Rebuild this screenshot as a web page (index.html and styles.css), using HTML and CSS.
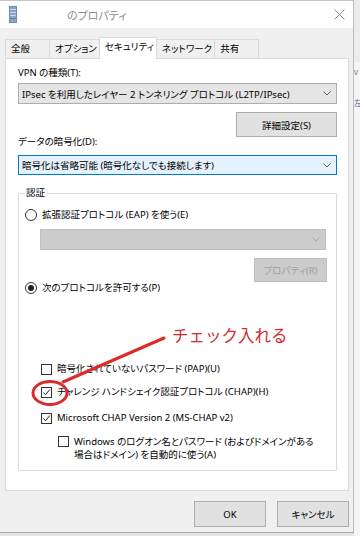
FILE: index.html
```html
<!DOCTYPE html>
<html lang="ja">
<head>
  <meta charset="UTF-8" />
  <meta name="viewport" content="width=device-width, initial-scale=1.0" />
  <title>のプロパティ</title>
  <link rel="stylesheet" href="styles.css">
</head>
<body>
  <div class="window">
    <div class="titlebar">
      <svg class="app-icon" viewBox="0 0 8 17">
        <rect x="0" y="0" width="8" height="17" fill="#6e8db3"/>
        <rect x="1" y="1" width="6" height="15" fill="#8aa6c8"/>
        <rect x="1" y="3" width="6" height="1" fill="#c9d8ea"/>
        <rect x="1" y="6" width="6" height="1" fill="#c9d8ea"/>
        <rect x="1" y="9" width="6" height="1" fill="#c9d8ea"/>
        <rect x="1" y="12" width="6" height="1" fill="#5d7aa0"/>
      </svg>
      <span class="title">のプロパティ</span>
      <svg class="close" viewBox="0 0 11 11">
        <path d="M0.5 0.5 L10.5 10.5 M10.5 0.5 L0.5 10.5" stroke="#8a8a8a" stroke-width="1" fill="none"/>
      </svg>
    </div>

    <div class="tabs">
      <div class="tab">全般</div>
      <div class="tab">オプション</div>
      <div class="tab active">セキュリティ</div>
      <div class="tab">ネットワーク</div>
      <div class="tab">共有</div>
    </div>

    <div class="panel">
      <div class="label">VPN の種類(T):</div>
      <div class="select">
        <span>IPsec を利用したレイヤー 2 トンネリング プロトコル (L2TP/IPsec)</span>
        <svg class="chevron" viewBox="0 0 8 5"><path d="M0.5 0.5 L4 4 L7.5 0.5" fill="none" stroke="#606060"/></svg>
      </div>
      <div class="btn-row">
        <button class="btn wide">詳細設定(S)</button>
      </div>
      <div class="label label-tight">データの暗号化(D):</div>
      <div class="select focus">
        <span>暗号化は省略可能 (暗号化なしでも接続します)</span>
        <svg class="chevron" viewBox="0 0 8 5"><path d="M0.5 0.5 L4 4 L7.5 0.5" fill="none" stroke="#606060"/></svg>
      </div>

      <fieldset class="group">
        <legend>認証</legend>
        <div class="radio-row">
          <span class="radio"></span>
          <span>拡張認証プロトコル (EAP) を使う(E)</span>
        </div>
        <div class="select disabled">
          <svg class="chevron" viewBox="0 0 8 5"><path d="M0.5 0.5 L4 4 L7.5 0.5" fill="none" stroke="#a8a8a8"/></svg>
        </div>
        <div class="btn-row">
          <button class="btn disabled">プロパティ(R)</button>
        </div>
        <div class="radio-row radio-tight">
          <span class="radio on"></span>
          <span>次のプロトコルを許可する(P)</span>
        </div>

        <div class="checks">
          <div class="check-row">
            <span class="box"></span>
            <span>暗号化されていないパスワード (PAP)(U)</span>
          </div>
          <div class="check-row">
            <span class="box"><svg viewBox="0 0 9 9"><path d="M1.5 4.5 L3.5 6.8 L7.8 1.5" fill="none" stroke="#222" stroke-width="1"/></svg></span>
            <span>チャレンジ ハンドシェイク認証プロトコル (CHAP)(H)</span>
          </div>
          <div class="check-row">
            <span class="box"><svg viewBox="0 0 9 9"><path d="M1.5 4.5 L3.5 6.8 L7.8 1.5" fill="none" stroke="#222" stroke-width="1"/></svg></span>
            <span>Microsoft CHAP Version 2 (MS-CHAP v2)</span>
          </div>
          <div class="check-row nested">
            <span class="box"></span>
            <span>Windows のログオン名とパスワード (およびドメインがある<br>場合はドメイン) を自動的に使う(A)</span>
          </div>
        </div>
      </fieldset>
    </div>

    <div class="footer">
      <button class="btn">OK</button>
      <button class="btn">キャンセル</button>
    </div>

    <!-- 赤い書き込み -->
    <svg class="markup" viewBox="0 0 354 533">
      <line x1="63" y1="382" x2="164" y2="338" stroke="#dd2a2a" stroke-width="3" stroke-linecap="round"/>
      <ellipse cx="50" cy="393" rx="17" ry="11.5" fill="none" stroke="#dd2a2a" stroke-width="3"/>
    </svg>
    <span class="note">チェック入れる</span>
  </div>

  <div class="desk">
    <div class="desk-top"></div>
    <div class="desk-v">v</div>
    <div class="desk-blue">左</div>
  </div>
</body>
</html>
```

FILE: styles.css
```css
* {
  box-sizing: border-box;
}
body {
  margin: 0;
  height: 536px;
  overflow: hidden;
  display: flex;
  background: #e4e4e4;
  color: #000;
  font-family: "Noto Sans", "Noto Sans CJK JP", sans-serif;
  font-size: 9.5px;
  font-feature-settings: "palt";
}
.window {
  position: relative;
  flex: none;
  width: 354px;
  height: 533px;
  display: flex;
  flex-direction: column;
  background: #f0f0f0;
  border-right: 1px solid #bdbdbd;
  border-bottom: 1px solid #a8a8a8;
}
.titlebar {
  height: 28px;
  display: flex;
  align-items: center;
  padding: 0 8px 0 9px;
  background: #fff;
  border-top: 1px solid #c6c6c6;
}
.app-icon {
  width: 8px;
  height: 17px;
}
.title {
  margin-left: 50px;
  color: #8c8c8c;
  font-size: 11px;
}
.close {
  margin-left: auto;
  width: 11px;
  height: 11px;
}
.tabs {
  height: 30px;
  display: flex;
  align-items: flex-end;
  padding-left: 5px;
  font-size: 9.5px;
}
.tab {
  height: 19px;
  min-width: 45px;
  padding: 0 2px 0 5px;
  margin-right: -1px;
  line-height: 18px;
  background: #f0f0f0;
  border: 1px solid #d9d9d9;
  border-bottom: none;
}
.tab.active {
  position: relative;
  z-index: 1;
  height: 22px;
  margin-bottom: -1px;
  padding-bottom: 2px;
  background: #fff;
}
.panel {
  height: 433px;
  margin: 0 4px 0 5px;
  padding: 7px 11px 0 12px;
  background: #fff;
  border: 1px solid #d9d9d9;
}
.label {
  line-height: 14px;
}
.label-tight {
  margin-top: -2px;
}
.select {
  height: 21px;
  margin-top: 3px;
  display: flex;
  align-items: center;
  justify-content: space-between;
  padding: 0 5px 0 3px;
  background: #e5e5e5;
  border: 1px solid #adadad;
  white-space: nowrap;
}
.select.focus {
  height: 20px;
  margin-top: 6px;
  background: #e5f1fb;
  border-color: #0078d7;
}
.select.disabled {
  margin: 7px 1px 0 15px;
  justify-content: flex-end;
  background: #cccccc;
  border-color: #bfbfbf;
}
.chevron {
  width: 8px;
  height: 5px;
  flex: none;
}
.btn-row {
  display: flex;
  justify-content: flex-end;
  margin-top: 8px;
}
.btn {
  width: 72px;
  height: 26px;
  padding: 0;
  font: inherit;
  color: #000;
  background: #e1e1e1;
  border: 1px solid #adadad;
}
.btn.wide {
  width: 101px;
  height: 25px;
}
.btn.disabled {
  width: 73px;
  height: 24px;
  color: #a0a0a0;
  background: #cccccc;
  border-color: #bfbfbf;
}
.group {
  margin: 11px 0 0;
  padding: 8px 9px 9px 6px;
  border: 1px solid #dcdcdc;
}
.group legend {
  padding: 0 1px;
  line-height: 14px;
}
.radio-row {
  display: flex;
  align-items: center;
  gap: 5px;
  line-height: 14px;
}
.radio-tight {
  margin-top: -1px;
}
.radio {
  width: 12px;
  height: 12px;
  display: grid;
  place-items: center;
  border: 1px solid #333;
  border-radius: 50%;
  background: #fff;
}
.radio.on::after {
  content: "";
  width: 6px;
  height: 6px;
  border-radius: 50%;
  background: #222;
}
.checks {
  margin-top: 67px;
  margin-left: 16px;
}
.check-row {
  display: flex;
  align-items: center;
  gap: 5px;
  line-height: 14px;
}
.check-row + .check-row {
  margin-top: 9px;
}
.check-row:nth-child(3) {
  margin-top: 12px;
}
.check-row.nested {
  margin-top: 10px;
  margin-left: 17px;
  align-items: flex-start;
  line-height: 13px;
}
.box {
  width: 11px;
  height: 11px;
  flex: none;
  display: grid;
  place-items: center;
  border: 1px solid #333;
  background: #fff;
}
.box svg {
  width: 9px;
  height: 9px;
}
.nested .box {
  margin-top: 1px;
}
.footer {
  display: flex;
  justify-content: flex-end;
  gap: 11px;
  padding: 10px 4px 0 0;
}
.markup {
  position: absolute;
  left: 0;
  top: 0;
  width: 354px;
  height: 533px;
  pointer-events: none;
}
.note {
  position: absolute;
  left: 172px;
  top: 323px;
  color: #d02a2e;
  font-family: "Noto Sans CJK JP", sans-serif;
  font-feature-settings: normal;
  font-size: 16.5px;
  line-height: 24px;
}
.desk {
  flex: 1;
  overflow: hidden;
  background: #f5f5f5;
  color: #777;
  font-size: 8px;
}
.desk-top {
  height: 62px;
  background: #ececec;
}
.desk-v {
  margin-top: 5px;
  line-height: 10px;
}
.desk-blue {
  margin-top: 20px;
  color: #3a64a8;
  font-size: 8px;
}
```
